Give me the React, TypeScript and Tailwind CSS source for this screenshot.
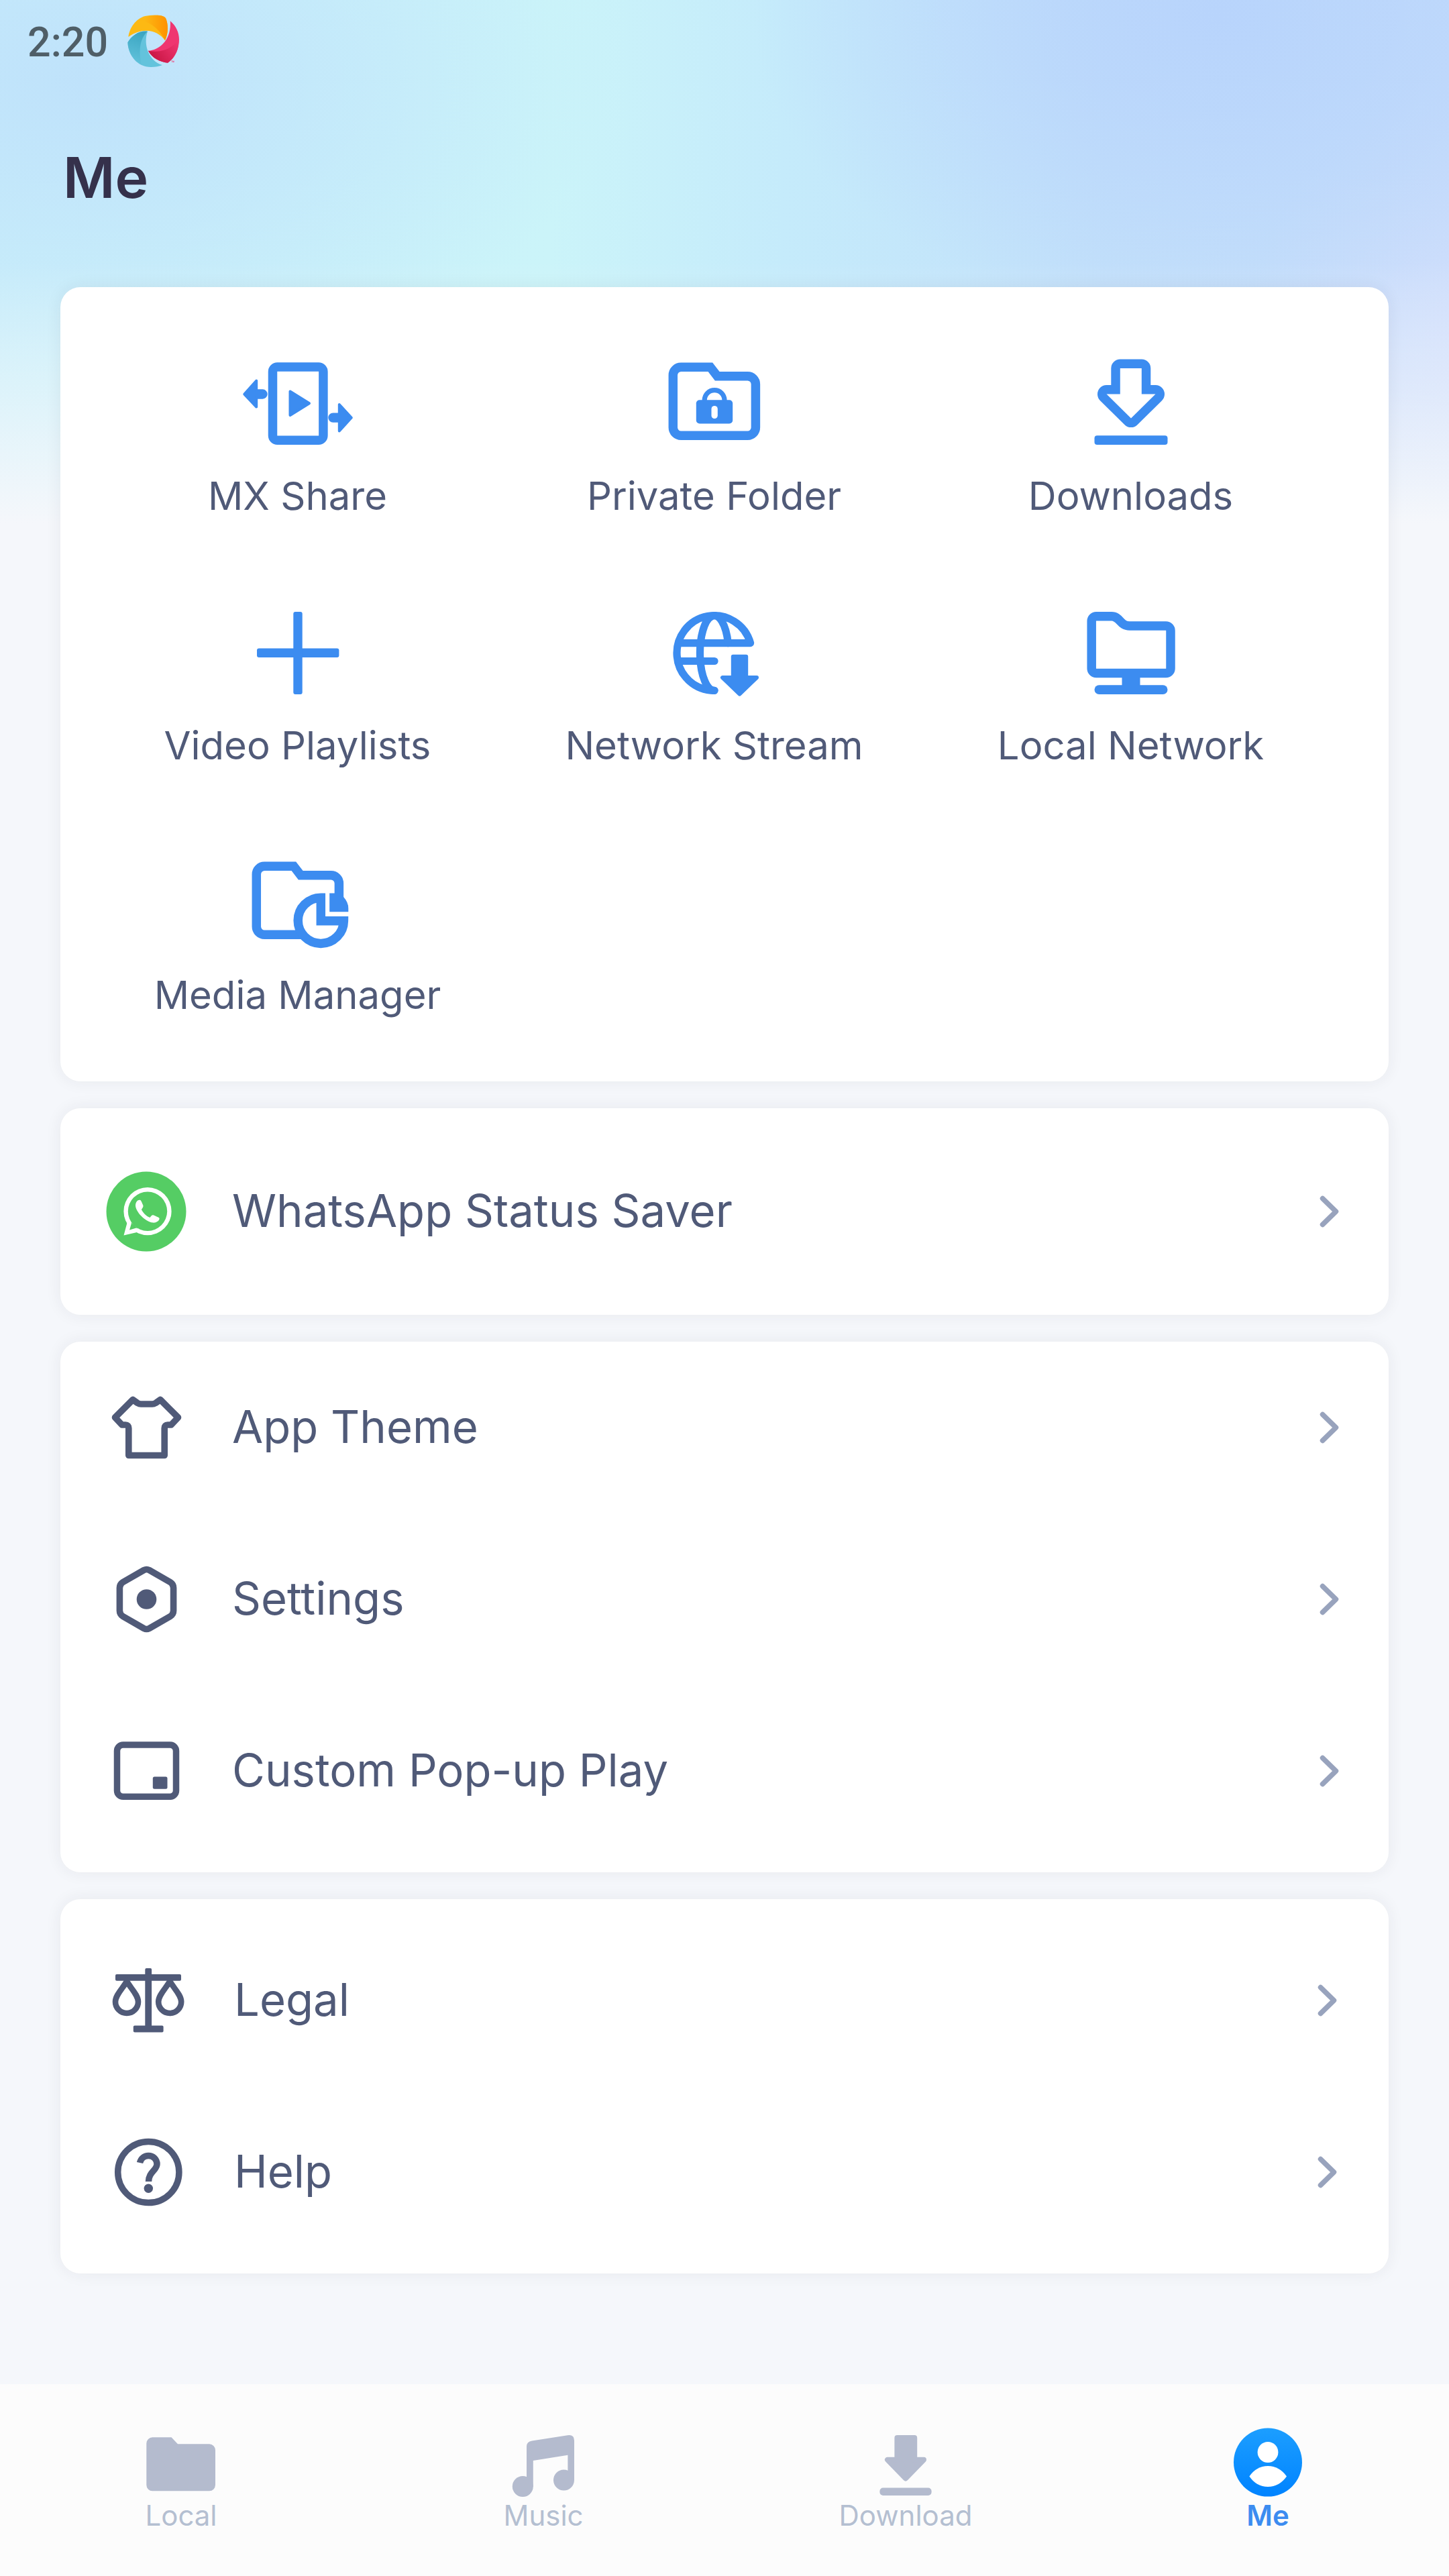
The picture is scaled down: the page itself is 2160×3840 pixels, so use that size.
import React from "react";

type IconProps = { children: React.ReactNode };

/* ---------- Icon frames ---------- */

function TileFrame({ children }: IconProps) {
  return (
    <svg viewBox="0 0 180 144" className="h-36 w-[180px]" fill="none" aria-hidden="true">
      {children}
    </svg>
  );
}

function RowFrame({ children }: IconProps) {
  return (
    <svg viewBox="0 0 120 120" className="size-[120px] shrink-0" fill="none" aria-hidden="true">
      {children}
    </svg>
  );
}

function TabFrame({ children }: IconProps) {
  return (
    <svg viewBox="0 0 120 116" className="h-[116px] w-[120px]" fill="none" aria-hidden="true">
      {children}
    </svg>
  );
}

/* ---------- Tile icons ---------- */

const BLUE = "#3c8cf0";
const INK = "#505a78";
const MUTED = "#b4bbce";

const folderOutline =
  "M40.3 19.2H83.8L94.2 32.7H139.4a12 12 0 0 1 12 12V109.2a12 12 0 0 1-12 12H40.3a12 12 0 0 1-12-12V31.2a12 12 0 0 1 12-12Z";

const ShareIcon = () => (
  <TileFrame>
    <rect x="52.5" y="19" width="75.4" height="109.3" rx="7" stroke={BLUE} strokeWidth="13.5" />
    <path d="M78.5 55.5V91L107 73.3Z" fill={BLUE} stroke={BLUE} strokeWidth="4" strokeLinejoin="round" />
    <path
      d="M10.3 59.6L28.2 39.5V54.3H37.5a5.2 5.2 0 0 1 0 10.4H28.2V78.6Z"
      fill={BLUE}
      stroke={BLUE}
      strokeWidth="4"
      strokeLinejoin="round"
    />
    <path
      d="M169.7 94.7L151.8 75V89.4H142.5a5.2 5.2 0 0 0 0 10.4H151.8V114.4Z"
      fill={BLUE}
      stroke={BLUE}
      strokeWidth="4"
      strokeLinejoin="round"
    />
  </TileFrame>
);

const PrivateFolderIcon = () => (
  <TileFrame>
    <path d={folderOutline} stroke={BLUE} strokeWidth="13.5" />
    <path d="M75.2 70V68.5a14.9 14.9 0 0 1 29.8 0V70" stroke={BLUE} strokeWidth="7.2" />
    <rect x="62.8" y="68.3" width="54.4" height="35.1" rx="5" fill={BLUE} />
    <rect x="85.5" y="76.9" width="9.3" height="19.1" rx="4.6" fill="#fff" />
  </TileFrame>
);

const DownloadsIcon = () => (
  <TileFrame>
    <path
      d="M73.8 21H105.8V59.6H126.5L90 95.6L53.5 59.6H73.8Z"
      fill="#fff"
      stroke={BLUE}
      strokeWidth="27"
      strokeLinejoin="round"
      paintOrder="stroke"
    />
    <rect x="35.5" y="121.2" width="109" height="13.8" rx="4" fill={BLUE} />
  </TileFrame>
);

const PlusIcon = () => (
  <TileFrame>
    <rect x="29" y="66.6" width="122.4" height="13.4" rx="3" fill={BLUE} />
    <rect x="83.3" y="12" width="13.4" height="123" rx="3" fill={BLUE} />
  </TileFrame>
);

const StreamIcon = () => (
  <TileFrame>
    <g stroke={BLUE} strokeWidth="11.2" strokeLinecap="round" strokeLinejoin="round">
      <path d="M36 58.6H143.6A55.8 55.8 0 1 0 90 129.3" />
      <path d="M110.3 58.6A21.3 55.8 0 1 0 90 129.3" />
      <path d="M35.5 85.5H90" />
    </g>
    <path
      d="M117.8 78.7H137.2V110H153L127.5 134.5L102 110H117.8Z"
      fill={BLUE}
      stroke={BLUE}
      strokeWidth="6"
      strokeLinejoin="round"
    />
  </TileFrame>
);

const LocalNetworkIcon = () => (
  <TileFrame>
    <path
      d="M38.2 18.8H61C74 18.8 73 33 88 33H142a7 7 0 0 1 7 7V96.6a7 7 0 0 1-7 7H38.2a7 7 0 0 1-7-7V25.8a7 7 0 0 1 7-7Z"
      stroke={BLUE}
      strokeWidth="13.5"
    />
    <rect x="76.5" y="106" width="27" height="20" fill={BLUE} />
    <rect x="35.5" y="121.2" width="109" height="13.8" rx="6.9" fill={BLUE} />
  </TileFrame>
);

const MediaManagerIcon = () => (
  <TileFrame>
    <path
      d="M151.4 66V44.7a12 12 0 0 0-12-12H94.2L83.8 19.2H40.3a12 12 0 0 0-12 12V109.2a12 12 0 0 0 12 12H98"
      stroke={BLUE}
      strokeWidth="13.5"
    />
    <path d="M137.2 59.5H152L158.2 65.3Q165.3 73 165.3 82V87.2H137.2Z" fill={BLUE} />
    <path
      d="M124.3 66.2V100.8H158.4A34.1 34.1 0 1 1 124.3 66.2Z"
      fill="#fff"
      stroke={BLUE}
      strokeWidth="13.5"
    />
  </TileFrame>
);

/* ---------- Row icons ---------- */

const WhatsAppIcon = () => (
  <RowFrame>
    <circle cx="60" cy="60" r="59.5" fill="#55cd64" />
    <path d="M32 75L26.5 95.4L46 91Z" fill="#fff" />
    <circle cx="62" cy="59.7" r="35.6" fill="#fff" />
    <circle cx="62" cy="59.7" r="29.2" fill="#55cd64" />
    <path d="M37.7 76.5V78.6L35 87.4L45 84.6L48 85.4Z" fill="#55cd64" />
    <path
      d="M44 51C44 46 47 42.7 50 42.7C52 42.7 52.6 44.5 55 50C56 52.5 55.5 53.2 52.9 57C55 61.5 60 67 65.4 69C68.5 65.5 69 64.8 71 65.6C76 68 79.6 69 79.6 70.5C79.6 74 74.5 77 70 76.6C58 75 44 60 44 51Z"
      fill="#fff"
    />
  </RowFrame>
);

const ShirtIcon = () => (
  <RowFrame>
    <path
      d="M40 18.5L13.5 45L23.8 56H29q4.8 0 4.8 5V101.5H87.2V61q0-5 4.8-5H97.2L107.5 45L81 18.5L74 23.5Q71.5 25 69 25H52Q49.5 25 47 23.5Z"
      stroke={INK}
      strokeWidth="9.6"
      strokeLinejoin="round"
    />
  </RowFrame>
);

const SettingsIcon = () => (
  <RowFrame>
    <path
      d="M56.5 16.5q4-2 8 0L95.5 34.3q5.1 3.2 5.1 8.7V77q0 5.5-5.1 8.7L64.5 103.5q-4 2-8 0L25.5 85.7q-5.1-3.2-5.1-8.7V43q0-5.5 5.1-8.7Z"
      stroke={INK}
      strokeWidth="9.6"
    />
    <circle cx="60.5" cy="60" r="14.8" fill={INK} />
  </RowFrame>
);

const PopupIcon = () => (
  <RowFrame>
    <rect x="16.5" y="21" width="88" height="77.3" rx="9" stroke={INK} strokeWidth="9.5" />
    <rect x="69.8" y="68.4" width="21.7" height="18.4" rx="2.5" fill={INK} />
  </RowFrame>
);

const ScalesIcon = () => (
  <RowFrame>
    <rect x="11" y="21" width="98" height="9.8" rx="2" fill={INK} />
    <rect x="55.3" y="12" width="9.8" height="92" rx="2" fill={INK} />
    <rect x="37.8" y="97.6" width="44.8" height="9.8" rx="2" fill={INK} />
    <g stroke={INK} strokeWidth="8.6">
      <path d="M28 31.5C22 42 11 52 11 62A17 17 0 0 0 45 62C45 52 34 42 28 31.5Z" />
      <path d="M92.2 31.5C86.2 42 75.2 52 75.2 62A17 17 0 0 0 109.2 62C109.2 52 98.2 42 92.2 31.5Z" />
    </g>
  </RowFrame>
);

const HelpIcon = () => (
  <RowFrame>
    <circle cx="60.3" cy="60" r="45.6" stroke={INK} strokeWidth="9.5" />
    <path d="M47.5 46C49 39.5 54 35.5 60.3 35.5C67.5 35.5 73 41 73 48C73 57 60.5 60 60.5 74" stroke={INK} strokeWidth="9.5" />
    <circle cx="60.3" cy="84.3" r="6.7" fill={INK} />
  </RowFrame>
);

const Chevron = () => (
  <svg viewBox="0 0 32 48" className="h-12 w-8 shrink-0" fill="none" aria-hidden="true">
    <path d="M5.5 4.5L25.5 24L5.5 43.5" stroke="#98a3bd" strokeWidth="7.5" strokeLinecap="round" strokeLinejoin="round" />
  </svg>
);

/* ---------- Tab bar icons ---------- */

const LocalTabIcon = () => (
  <TabFrame>
    <path
      d="M17 23.3H45.5L55 33.3H102a9 9 0 0 1 9 9V94.3a9 9 0 0 1-9 9H17.3a9 9 0 0 1-9-9V32.3a9 9 0 0 1 9-9Z"
      fill={MUTED}
    />
  </TabFrame>
);

const MusicTabIcon = () => (
  <TabFrame>
    <path d="M35 37Q35 30 43 28.6L96 20.2Q106 18.8 106 28V87H96.4V49.7L44.8 58V97H35Z" fill={MUTED} />
    <circle cx="29.3" cy="96.5" r="15.5" fill={MUTED} />
    <circle cx="90.5" cy="87" r="15.5" fill={MUTED} />
  </TabFrame>
);

const DownloadTabIcon = () => (
  <TabFrame>
    <path
      d="M47.4 24H73.2V56.7H87L60 84.5L33 56.7H47.4Z"
      fill={MUTED}
      stroke={MUTED}
      strokeWidth="8"
      strokeLinejoin="round"
    />
    <rect x="21.4" y="98.5" width="77.2" height="11.5" rx="5" fill={MUTED} />
  </TabFrame>
);

const MeTabIcon = () => (
  <TabFrame>
    <defs>
      <linearGradient id="meTab" x1="0" y1="0" x2="0" y2="1">
        <stop offset="0" stopColor="#1c9eff" />
        <stop offset="1" stopColor="#0083ff" />
      </linearGradient>
    </defs>
    <circle cx="60" cy="60.6" r="51" fill="url(#meTab)" />
    <circle cx="60" cy="45.5" r="15.4" fill="#fff" />
    <path d="M32.4 81.5Q43 66 60 66Q77 66 88 81.5Q77 97 60 97Q43 97 32.4 81.5Z" fill="#fff" />
  </TabFrame>
);

/* ---------- Status bar logo ---------- */

const SwirlLogo = () => (
  <svg viewBox="0 0 80 80" className="size-20" aria-hidden="true">
    <defs>
      <linearGradient id="swirlOrange" x1="0" y1="0" x2="1" y2="0">
        <stop offset="0.2" stopColor="#fdb813" />
        <stop offset="1" stopColor="#ff9100" />
      </linearGradient>
      <linearGradient id="swirlRed" x1="0" y1="0.8" x2="1" y2="0.2">
        <stop offset="0" stopColor="#c4123f" />
        <stop offset="1" stopColor="#ef3670" />
      </linearGradient>
      <linearGradient id="swirlTeal" x1="0.6" y1="0" x2="0.4" y2="1">
        <stop offset="0" stopColor="#3aa5c1" />
        <stop offset="1" stopColor="#63c3dc" />
      </linearGradient>
    </defs>
    <path d="M2.4 33C4 20 13 6 27.2 2C34 .3 44 .5 49.6 1C54 2 57 3 58.5 6C61.5 14 62.5 27 57 38.3C47 24 25 17 2.4 33Z" fill="#fdb913" />
    <path d="M18.6 9C32 .5 41 .3 49.6 1C54 2 57 3 58.5 6C61.5 14 62.5 27 57 38.3C50 24 37 10 18.6 9Z" fill="url(#swirlOrange)" />
    <path d="M64.8 9.3C73 16 78 26 78 37C78 52 71 65 61 71.7C49 70 38 65 32 53.7C48 53 67 38 64.8 9.3Z" fill="#ef3670" />
    <path d="M32 53.7C50 57 66 52 77 37C78.5 52 71 65 61 71.7C49 70 38 65 32 53.7Z" fill="url(#swirlRed)" />
    <path d="M31 24.7C19 23 7 31 1.4 41.3C2 61 16 78 36 78C43 78 48 77 53 75C33 69 24 45 31 24.7Z" fill="#63c3dc" />
    <path d="M31 24.7C19 23 7 31 1.4 41.3C2 56 10 68 22 74.5C18 58 18 36 31 24.7Z" fill="url(#swirlTeal)" />
    <text x="66" y="75" fontSize="9" fill="#ef3670" className="font-['Roboto',sans-serif]">
      ™
    </text>
  </svg>
);

/* ---------- Data ---------- */

const tiles = [
  { label: "MX Share", Icon: ShareIcon },
  { label: "Private Folder", Icon: PrivateFolderIcon },
  { label: "Downloads", Icon: DownloadsIcon },
  { label: "Video Playlists", Icon: PlusIcon },
  { label: "Network Stream", Icon: StreamIcon },
  { label: "Local Network", Icon: LocalNetworkIcon },
  { label: "Media Manager", Icon: MediaManagerIcon },
];

const tabs = [
  { label: "Local", Icon: LocalTabIcon, active: false },
  { label: "Music", Icon: MusicTabIcon, active: false },
  { label: "Download", Icon: DownloadTabIcon, active: false },
  { label: "Me", Icon: MeTabIcon, active: true },
];

/* ---------- Building blocks ---------- */

function Card({ className, children }: { className: string; children: React.ReactNode }) {
  return (
    <section className={`rounded-[30px] bg-white shadow-[0_0_24px_rgba(40,40,60,0.07)] ${className}`}>
      {children}
    </section>
  );
}

function Row({ label, Icon }: { label: string; Icon: () => React.ReactElement }) {
  return (
    <button type="button" className="flex h-64 w-full items-center gap-[68px] text-left">
      <Icon />
      <span className="flex-1 pb-0.5 text-[67px] leading-[80px]">{label}</span>
      <Chevron />
    </button>
  );
}

export default function App() {
  return (
    <div className="flex min-h-screen flex-col bg-[#f5f7fb] bg-[linear-gradient(to_bottom,rgba(245,247,251,0)_50%,rgba(245,247,251,0.45)_75%,#f5f7fb_100%),radial-gradient(ellipse_32%_58%_at_84%_3%,#b8d4fc_0%,rgba(184,212,252,0.7)_35%,rgba(184,212,252,0)_100%),radial-gradient(ellipse_18%_50%_at_104%_66%,#d3dffc_0%,rgba(211,223,252,0)_100%),radial-gradient(ellipse_36%_58%_at_6%_16%,#bfe2fb_0%,rgba(191,226,251,0)_100%),linear-gradient(90deg,#caf0fa_0%,#cbf4f9_38%,#c5ebfb_54%,#c2e0fa_76%,#c4dcfb_100%)] bg-[length:100%_780px] bg-no-repeat font-['Inter',sans-serif] text-[#505a78]">
      <div className="flex h-[124px] items-center gap-7 pl-[41px]">
        <span className="pt-0.5 font-['Roboto',sans-serif] text-[61px] leading-[72px] font-medium text-[#4f5e67]">2:20</span>
        <SwirlLogo />
      </div>

      <header className="px-[94px] pt-[93px] pb-[115px]">
        <h1 className="text-[84px] leading-[96px] font-semibold text-[#35314b]">Me</h1>
      </header>

      <main className="flex flex-col gap-10 px-[90px] pb-[165px]">
        <Card className="pt-[100px] pr-[74px] pb-[97px] pl-[43px]">
          <div className="grid grid-cols-3 gap-y-[129px]">
            {tiles.map(({ label, Icon }) => (
              <button key={label} type="button" className="flex flex-col items-center gap-[35px]">
                <Icon />
                <span className="text-[58px] leading-[64px]">{label}</span>
              </button>
            ))}
          </div>
        </Card>

        <Card className="py-[26px] pr-[72px] pl-[68px]">
          <Row label="WhatsApp Status Saver" Icon={WhatsAppIcon} />
        </Card>

        <Card className="pr-[72px] pb-[23px] pl-[68px]">
          <Row label="App Theme" Icon={ShirtIcon} />
          <Row label="Settings" Icon={SettingsIcon} />
          <Row label="Custom Pop-up Play" Icon={PopupIcon} />
        </Card>

        <Card className="py-[23px] pr-[75px] pl-[71px]">
          <Row label="Legal" Icon={ScalesIcon} />
          <Row label="Help" Icon={HelpIcon} />
        </Card>
      </main>

      <nav className="mt-auto grid grid-cols-4 bg-[#fcfcfc] pt-14 pb-[66px]">
        {tabs.map(({ label, Icon, active }) => (
          <button
            key={label}
            type="button"
            aria-current={active ? "page" : undefined}
            className={`flex flex-col items-center text-[42px] leading-[48px] ${
              active ? "font-semibold text-[#3c8cf0]" : "text-[#b4bfd1]"
            }`}
          >
            <Icon />
            <span>{label}</span>
          </button>
        ))}
      </nav>
    </div>
  );
}
